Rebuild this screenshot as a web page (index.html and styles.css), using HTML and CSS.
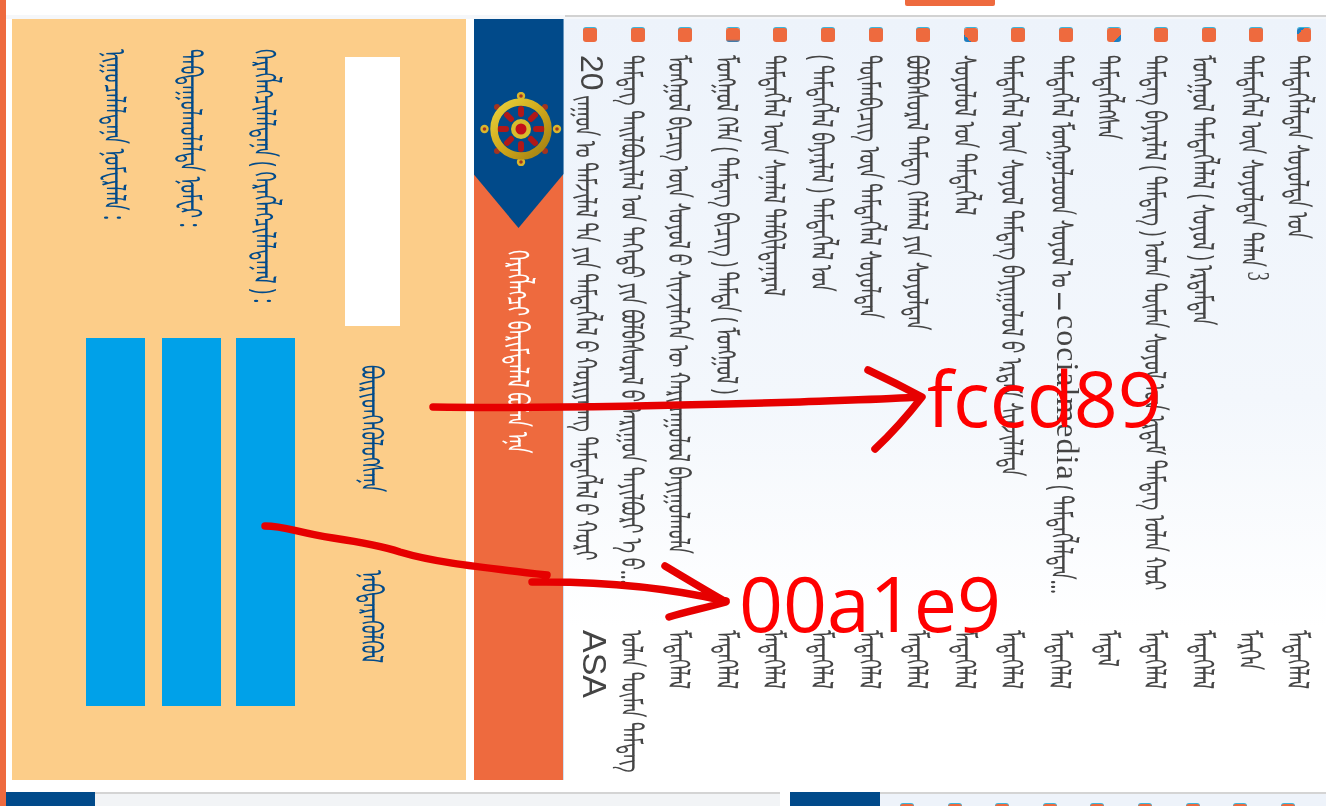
FILE: index.html
```html
<!DOCTYPE html>
<html lang="mn">
<head>
<meta charset="utf-8">
<title>ᠨᠡᠪᠲᠡᠷᠡᠬᠦ</title>
<link rel="stylesheet" href="styles.css">
</head>
<body>
<div class="page">
  <header class="topbar"><span class="toptab"></span></header>
  <main class="main">
    <section class="panel">
      <div class="field"><label class="label">ᠨᠢᠭᠤᠴᠠᠯᠠᠯᠲᠠᠨᠡ ᠨᠣᠮᠧᠷᠯᠡᠯᠡ :</label><span class="button"></span></div>
      <div class="field"><label class="label">ᠳᠠᠪᠲᠠᠭᠤᠯᠬᠤᠯᠠᠯᠲᠠ ᠨᠣᠮᠧᠷ :</label><span class="button"></span></div>
      <div class="field"><label class="label">ᠬᠡᠷᠡᠭᠯᠡᠭᠴᠢᠯᠡᠯᠲᠡᠨᠡ ( ᠬᠡᠷᠡᠭᠯᠡᠭᠴᠢᠯᠡᠯᠲᠡᠨᠡᠯ ) :</label><span class="button"></span></div>
      <div class="captcha">
        <span class="code"></span>
        <span class="action">ᠪᠦᠷᠢᠳᠬᠡᠭᠦᠯᠦᠭᠰᠡᠨᠡ</span>
        <span class="action">ᠨᠡᠪᠲᠡᠷᠡᠭᠦᠯᠬᠦᠯ</span>
      </div>
    </section>
    <section class="banner">
      <div class="ribbon">
        <svg class="wheel" viewBox="0 0 82 74" aria-hidden="true">
          <defs><linearGradient id="gold" x1="0" y1="0" x2="1" y2="1"><stop offset="0" stop-color="#e8d23c"/><stop offset=".5" stop-color="#d0a81a"/><stop offset="1" stop-color="#a07e12"/></linearGradient></defs>
          <g fill="#d9b62c"><circle cx="41" cy="4" r="4.2"/><circle cx="41" cy="70" r="4.2"/><circle cx="4.5" cy="37" r="4.2"/><circle cx="77" cy="37" r="4.2"/></g>
          <g fill="#a3331f"><circle cx="41" cy="4" r="1.8"/><circle cx="41" cy="70" r="1.8"/><circle cx="4.5" cy="37" r="1.8"/><circle cx="77" cy="37" r="1.8"/><circle cx="17" cy="15" r="3"/><circle cx="65" cy="15" r="3"/><circle cx="17" cy="59" r="3"/><circle cx="65" cy="59" r="3"/></g>
          <g stroke="#b01818" stroke-width="6" stroke-linecap="round"><line x1="41" y1="17" x2="41" y2="22"/><line x1="41" y1="52" x2="41" y2="57"/><line x1="20" y1="37" x2="26" y2="37"/><line x1="56" y1="37" x2="62" y2="37"/><line x1="27" y1="23" x2="31" y2="27"/><line x1="51" y1="47" x2="55" y2="51"/><line x1="55" y1="23" x2="51" y2="27"/><line x1="31" y1="47" x2="27" y2="51"/></g>
          <circle cx="41" cy="37" r="27" fill="none" stroke="url(#gold)" stroke-width="7.5"/>
          <circle cx="41" cy="37" r="10" fill="#d9bc2c"/>
          <circle cx="41" cy="37" r="5.5" fill="#c4101a"/>
        </svg>
      </div>
      <h1 class="banner-title">ᠬᠡᠷᠡᠭᠯᠡᠭᠴᠢ ᠪᠠᠷᠢᠮᠲᠠᠯᠠᠯ ᠪᠣᠯᠠᠨ ᠡᠨᠡ</h1>
    </section>
    <section class="news">
      <div class="item"><i class="dot"></i><span class="title"><span class="num">20</span> ᠵᠠᠭᠤᠨ ᠤ ᠳᠠᠮᠵᠢᠯᠠᠯ ᠲᠠ ᠶᠢᠨ ᠲᠡᠮᠳᠡᠭᠯᠡᠯ ᠪ ᠬᠣᠷᠢᠶᠠᠯᠠᠩ ᠲᠡᠮᠳᠡᠭᠯᠡᠯ ᠪ ᠬᠣᠷᠢ</span><span class="meta asa">ASA</span></div>
      <div class="item"><i class="dot"></i><span class="title">ᠲᠡᠮᠳᠡᠭ ᠲᠠᠢᠯᠪᠤᠷᠢᠯᠠᠯ ᠤᠨ ᠳᠡᠭᠡᠳᠦ ᠶᠢᠨ ᠪᠣᠯᠪᠠᠰᠤᠷᠠᠯ ᠪ ᠠᠷᠢᠭᠤᠨ ᠲᠠᠶᠢᠯᠪᠤᠷᠢ ᠡ ᠪ…</span><span class="meta">ᠣᠯᠠᠨ ᠲᠦᠮᠡᠨ ᠲᠡᠮᠳᠡᠭ</span></div>
      <div class="item"><i class="dot"></i><span class="title">ᠮᠣᠩᠭᠣᠯ ᠪᠢᠴᠢᠭ ᠦᠨ ᠰᠣᠶᠣᠯ ᠪ ᠰᠢᠨᠵᠢᠯᠡᠭᠡᠨ ᠦ ᠬᠠᠷᠢᠴᠠᠭᠤᠯᠤᠯ ᠪᠠᠶᠢᠭᠤᠯᠬᠤᠯᠠ</span><span class="meta">ᠮᠡᠳᠡᠭᠡᠯᠡᠯ</span></div>
      <div class="item"><i class="dot corner-b"></i><span class="title">ᠮᠣᠩᠭᠣᠯ ᠬᠡᠯᠡ ( ᠲᠡᠮᠳᠡᠭ ᠪᠢᠴᠢᠭ ) ᠲᠡᠮᠳᠡ ( ᠮᠣᠩᠭᠣᠯ )</span><span class="meta">ᠮᠡᠳᠡᠭᠡᠯᠡᠯ</span></div>
      <div class="item"><i class="dot"></i><span class="title">ᠲᠡᠮᠳᠡᠭᠯᠡᠯ ᠦᠨ ᠰᠠᠨᠠᠯᠠᠯ ᠲᠠᠯᠪᠢᠯᠲᠠᠨᠠᠷᠠᠯ</span><span class="meta">ᠮᠡᠳᠡᠭᠡᠯᠡᠯ</span></div>
      <div class="item"><i class="dot"></i><span class="title">( ᠲᠡᠮᠳᠡᠭᠯᠡᠯ ᠪᠠᠶᠠᠷᠯᠠᠯ ) ᠲᠡᠮᠳᠡᠭᠯᠡᠯ ᠤᠨ</span><span class="meta">ᠮᠡᠳᠡᠭᠡᠯᠡᠯ</span></div>
      <div class="item"><i class="dot"></i><span class="title">ᠲᠦᠮᠡᠨᠪᠢᠴᠢᠭ ᠦᠨ ᠲᠡᠮᠳᠡᠭᠯᠡᠯ ᠰᠣᠶᠣᠯᠲᠠᠨ</span><span class="meta">ᠮᠡᠳᠡᠭᠡᠯᠡᠯ</span></div>
      <div class="item"><i class="dot"></i><span class="title">ᠪᠣᠯᠪᠠᠰᠤᠷᠠᠯ ᠲᠡᠮᠳᠡᠭ ᠬᠡᠯᠡᠯᠡᠯ ᠶᠢᠨ ᠰᠣᠶᠣᠯᠲᠠᠨ</span><span class="meta">ᠮᠡᠳᠡᠭᠡᠯᠡᠯ</span></div>
      <div class="item"><i class="dot corner-bl"></i><span class="title">ᠰᠣᠶᠣᠯᠤᠯ ᠤᠨ ᠲᠡᠮᠳᠡᠭᠯᠡᠯ</span><span class="meta">ᠮᠡᠳᠡᠭᠡᠯᠡᠯ</span></div>
      <div class="item"><i class="dot"></i><span class="title">ᠲᠡᠮᠳᠡᠭᠯᠡᠯ ᠦᠨ ᠰᠣᠶᠣᠯ ᠲᠡᠮᠳᠡᠭ ᠪᠠᠶᠢᠭᠤᠯᠤᠯ ᠪ ᠡᠷᠳᠡᠮ ᠰᠢᠨᠵᠢᠯᠡᠯᠲᠡ</span><span class="meta">ᠮᠡᠳᠡᠭᠡᠯᠡᠯ</span></div>
      <div class="item"><i class="dot"></i><span class="title">ᠲᠡᠮᠳᠡᠭᠯᠡᠯ ᠮᠣᠩᠭᠣᠯᠴᠤᠳ ᠰᠣᠶᠣᠯ ᠤ — <span class="word">cocialmedia</span> ( ᠲᠡᠮᠳᠡᠭᠯᠡᠯᠲᠡᠨ…</span><span class="meta">ᠮᠡᠳᠡᠭᠡᠯᠡᠯ</span></div>
      <div class="item"><i class="dot corner-br"></i><span class="title">ᠲᠡᠮᠳᠡᠭᠯᠡᠭᠰᠡᠨ</span><span class="meta">ᠮᠡᠳᠡᠯ</span></div>
      <div class="item"><i class="dot"></i><span class="title">ᠲᠡᠮᠳᠡᠭ ᠪᠠᠶᠠᠷᠯᠠᠯ ( ᠲᠡᠮᠳᠡᠭ ) ᠣᠯᠠᠨ ᠲᠦᠮᠡᠨ ᠰᠣᠶᠣᠯ ᠤᠨ ᠡᠷᠳᠡᠮ ᠲᠡᠮᠳᠡᠭ ᠣᠯᠠᠨ ᠬᠤᠷ</span><span class="meta">ᠮᠡᠳᠡᠭᠡᠯᠡᠯ</span></div>
      <div class="item"><i class="dot"></i><span class="title">ᠮᠣᠩᠭᠣᠯ ᠲᠡᠮᠳᠡᠭᠯᠡᠯᠡᠯ ( ᠰᠣᠶᠣᠯ ) ᠡᠷᠳᠡᠮᠲᠡᠨ</span><span class="meta">ᠮᠡᠳᠡᠭᠡᠯᠡᠯ</span></div>
      <div class="item"><i class="dot"></i><span class="title">ᠲᠡᠮᠳᠡᠭᠯᠡᠯ ᠦᠨ ᠰᠣᠶᠣᠯᠲᠠᠨ ᠲᠠᠯᠠᠨ <span class="digit">3</span></span><span class="meta">ᠮᠡᠷᠭᠡᠨ</span></div>
      <div class="item"><i class="dot corner-tl"></i><span class="title">ᠲᠡᠮᠳᠡᠭᠯᠡᠯᠲᠡᠨ ᠰᠣᠶᠣᠯᠲᠠ ᠤᠨ</span><span class="meta">ᠮᠡᠳᠡᠭᠡᠯᠡᠯ</span></div>
    </section>
  </main>
  <footer class="bottom">
    <span class="foot-tab"></span><span class="foot-strip"></span><span class="foot-tab"></span>
    <span class="foot-dots"><i class="dot"></i><i class="dot"></i><i class="dot"></i><i class="dot"></i><i class="dot"></i><i class="dot"></i><i class="dot"></i><i class="dot"></i><i class="dot"></i></span>
  </footer>
  <svg class="marks" viewBox="0 0 1326 806" aria-hidden="true">
    <g class="mark-lines">
      <path d="M433 407C560 409 700 405 800 402C850 400 890 399 920 397M868 370C885 378 905 388 922 397C908 415 890 435 875 449"/>
      <path d="M265 526C285 526 295 532 333 538C360 542 385 547 400 552C430 561 460 565 547 575M532 582C600 581 660 586 726 601M665 566C685 578 705 590 726 602C705 608 685 612 669 617"/>
    </g>
  </svg>
  <span class="note note-a">fccd89</span>
  <span class="note note-b">00a1e9</span>
</div>
</body>
</html>
```
FILE: styles.css
```css
* { box-sizing: border-box; }
html, body { margin: 0; padding: 0; }
body { background: #fff; font-family: "Noto Sans", "Liberation Sans", sans-serif; color: #333; }
.page { position: relative; width: 1326px; height: 806px; overflow: hidden; background: #fff; border-left: 6px solid #ee6a3e; display: flex; flex-direction: column; }

.topbar { height: 19px; flex: none; padding-left: 899px; background: linear-gradient(#d2d2d2, #d2d2d2) no-repeat 559px 15px / 761px 2px, linear-gradient(#fff 0, #fff 15px, #f5f7fa 15px); }
.toptab { display: block; width: 90px; height: 6px; background: #ee6a3e; border-radius: 0 0 2px 2px; }

.main { flex: none; height: 761px; display: flex; padding-left: 6px; }
.label, .action, .banner-title, .title, .meta { writing-mode: vertical-lr; font-family: "Noto Sans Mongolian", "Noto Sans", "DejaVu Sans", sans-serif; font-size: 18px; line-height: 15px; white-space: nowrap; transform: translateX(6.5px) scaleX(1.7); filter: blur(.3px); }

.panel { width: 454px; background: #fccd89; flex: none; padding: 30px 0 0 74px; margin-right: 8px; display: flex; }
.field { display: flex; flex-direction: column; width: 59px; margin-right: 15px; }
.field:first-child { margin-right: 17px; }
.label { color: #014a8a; height: 289px; align-self: center; }
.button { display: block; height: 368px; background: #00a1e9; }
.captcha { width: 55px; margin-left: 35px; padding-top: 8px; display: flex; flex-direction: column; align-items: center; }
.code { display: block; width: 55px; height: 269px; background: #fff; margin-bottom: 39px; flex: none; }
.action { color: #014a8a; height: 205px; flex: none; }

.banner { width: 90px; flex: none; background: #ee6a3e; display: flex; flex-direction: column; align-items: center; border-right: 1px solid #cfe2f3; }
.ribbon { width: 90px; height: 209px; flex: none; background: #014a8a; clip-path: polygon(0 0, 100% 0, 100% 155px, 50% 100%, 0 155px); padding: 73px 0 0 6px; }
.wheel { display: block; width: 82px; height: 74px; }
.banner-title { color: #fff; font-weight: 400; margin: 22px 0 0; }

.news { flex: 1; display: flex; padding: 9px 0 0 3px; background: linear-gradient(#edf3fb 0, #f3f7fc 50%, #fff 80%); }
.item { flex: none; width: 47.6px; display: flex; flex-direction: column; padding-left: 16px; }
.dot { display: block; flex: none; width: 14px; height: 14px; border-radius: 3px; background: #ee6a3e; box-shadow: 0 -1px 0 #39b6dc; }
.corner-b { background: linear-gradient(#ee6a3e 80%, #1f7fc0); }
.corner-bl { background: linear-gradient(45deg, #1f7fc0 25%, #ee6a3e 25%); }
.corner-br { background: linear-gradient(-45deg, #1f7fc0 25%, #ee6a3e 25%); }
.corner-tl { background: linear-gradient(135deg, #1f7fc0 25%, #ee6a3e 25%); }
.title { flex: none; height: 575px; margin-top: 13px; color: #444; }
.meta { color: #444; }
.num { display: inline-block; font-family: "Liberation Sans", sans-serif; font-size: 32px; transform: scaleX(.59); }
.word { display: inline-block; font-family: "Liberation Serif", serif; font-size: 32px; letter-spacing: 1px; transform: scaleX(.59); }
.digit { font-family: "Liberation Serif", serif; }
.asa { font-family: "Liberation Sans", sans-serif; font-size: 34px; line-height: 24px; transform: none; width: 24px; }

.bottom { flex: 1; display: flex; align-items: flex-end; background: #fff; }
.foot-tab { display: block; flex: none; width: 90px; height: 14px; background: #014a8a; }
.foot-tab:first-child { width: 89px; }
.foot-strip { flex: none; width: 685px; height: 14px; margin-right: 10px; background: #f2f4f6; border-top: 2px solid #d4d4d4; }
.foot-dots { flex: 1; height: 14px; display: flex; gap: 33.6px; padding: 10px 0 0 20px; background: #eef3fa; border-top: 2px solid #d4d4d4; overflow: hidden; }

.marks { position: absolute; left: -6px; top: 0; width: 1326px; height: 806px; pointer-events: none; }
.mark-lines path { fill: none; stroke: #e60000; stroke-width: 7.5; stroke-linecap: round; stroke-linejoin: round; }
.note { position: absolute; color: #f00; font-family: "Open Sans", "Noto Sans", sans-serif; line-height: 1; font-size: 77px; }
.note-a { left: 921px; top: 359px; }
.note-b { left: 733px; top: 564px; }
```
